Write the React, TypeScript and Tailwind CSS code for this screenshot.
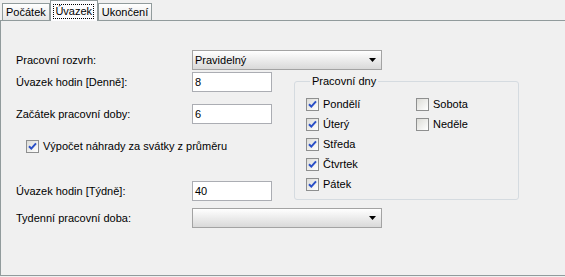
import React from "react";

function Check({ checked }: { checked: boolean }) {
  return (
    <span className="flex h-[13px] w-[13px] shrink-0 items-center justify-center border border-[#8e8f8f] bg-gradient-to-br from-[#dcdcd7] to-[#ffffff]">
      {checked && (
        <svg width="9" height="9" viewBox="0 0 9 9">
          <path
            d="M1 4.2 L3.3 6.6 L8 1.4"
            fill="none"
            stroke="#2a4fc6"
            strokeWidth="2"
          />
        </svg>
      )}
    </span>
  );
}

function CheckRow({ label, checked }: { label: string; checked: boolean }) {
  return (
    <div className="flex h-[20px] items-center gap-[4px]">
      <Check checked={checked} />
      <span>{label}</span>
    </div>
  );
}

function Select({ value }: { value?: string }) {
  return (
    <div className="flex h-[20px] w-[190px] items-center justify-between border border-[#a3a3a3] bg-gradient-to-b from-[#ffffff] to-[#d9d9d9] pl-[2px] pr-[4px]">
      <span>{value}</span>
      <svg width="8" height="5" viewBox="0 0 8 5">
        <path d="M0 0 H7 L3.5 4 Z" fill="#000" />
      </svg>
    </div>
  );
}

function Input({ value }: { value: string }) {
  return (
    <div className="flex h-[20px] w-[80px] items-center border border-[#abadb3] bg-white pl-[2px]">
      {value}
    </div>
  );
}

function Row({ label, children }: { label: string; children: React.ReactNode }) {
  return (
    <div className="flex h-[20px] items-center">
      <span className="w-[176px]">{label}</span>
      {children}
    </div>
  );
}

export default function App() {
  const tabs = ["Počátek", "Úvazek", "Ukončení"];
  return (
    <div className="h-[277px] w-[565px] overflow-hidden bg-[#f0f0f0] text-[11px] text-black [font-family:'Liberation_Sans',Arial,sans-serif]">
      {/* tabs */}
      <div className="flex h-[20px] items-end pl-[2px]">
        {tabs.map((t) =>
          t === "Úvazek" ? (
            <div
              key={t}
              className="relative z-10 -mb-px flex h-[21px] w-[48px] items-center justify-center border border-b-0 border-[#919b9c] bg-[#fcfcfe]"
            >
              <span className="border border-dotted border-black px-[1px] leading-[13px]">{t}</span>
            </div>
          ) : (
            <div
              key={t}
              className="flex h-[17px] items-center border border-b-0 border-[#919b9c] bg-gradient-to-b from-[#ffffff] to-[#e6e6e6] px-[3px]"
            >
              {t}
            </div>
          )
        )}
      </div>

      {/* panel */}
      <div className="h-[256px] border-b border-l border-t border-[#919b9c] pl-[15px] pt-[29px]">
        <Row label="Pracovní rozvrh:">
          <Select value="Pravidelný" />
        </Row>

        <div className="mt-[2px] flex">
          <div className="w-[278px]">
            <Row label="Úvazek hodin [Denně]:">
              <Input value="8" />
            </Row>
            <div className="mt-[12px]">
              <Row label="Začátek pracovní doby:">
                <Input value="6" />
              </Row>
            </div>
            <div className="mt-[12px] pl-[10px]">
              <CheckRow label="Výpočet náhrady za svátky z průměru" checked />
            </div>
            <div className="mt-[25px]">
              <Row label="Úvazek hodin [Týdně]:">
                <Input value="40" />
              </Row>
            </div>
          </div>

          <fieldset className="mt-[3px] h-[125px] w-[225px] rounded-[3px] border border-[#d5dbe0] pl-[11px]">
            <legend className="ml-[4px] px-[2px] leading-[13px]">Pracovní dny</legend>
            <div className="mt-[6px] flex">
              <div className="w-[110px]">
                <CheckRow label="Pondělí" checked />
                <CheckRow label="Úterý" checked />
                <CheckRow label="Středa" checked />
                <CheckRow label="Čtvrtek" checked />
                <CheckRow label="Pátek" checked />
              </div>
              <div>
                <CheckRow label="Sobota" checked={false} />
                <CheckRow label="Neděle" checked={false} />
              </div>
            </div>
          </fieldset>
        </div>

        <div className="mt-[7px]">
          <Row label="Tydenní pracovní doba:">
            <Select />
          </Row>
        </div>
      </div>
    </div>
  );
}
